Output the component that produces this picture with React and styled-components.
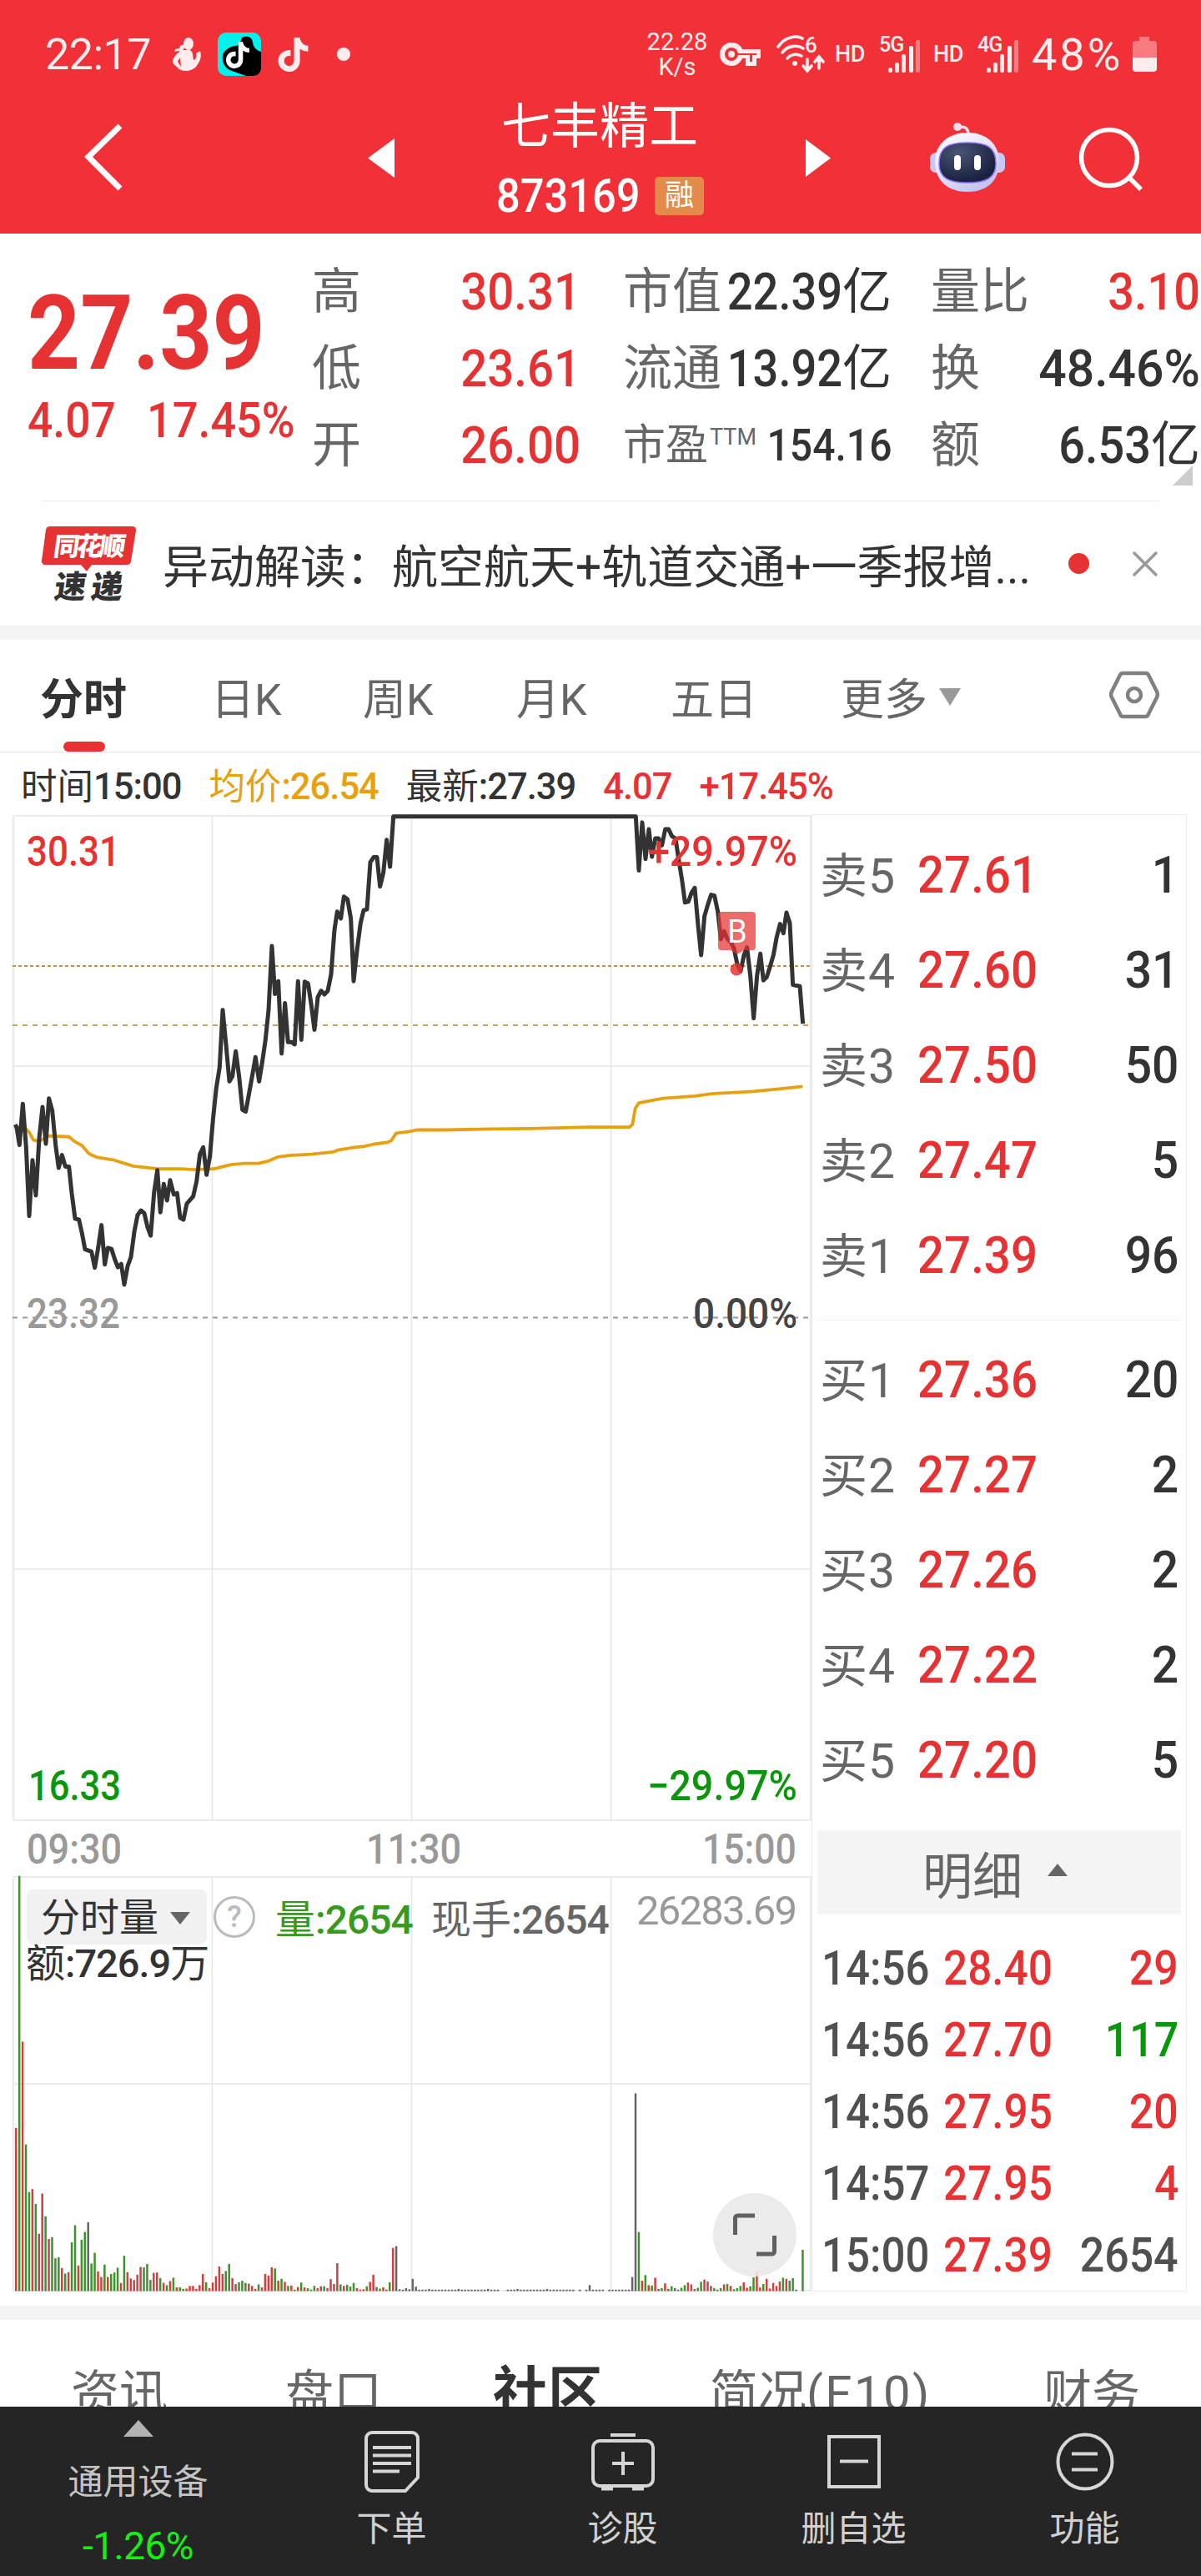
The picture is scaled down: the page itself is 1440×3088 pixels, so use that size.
import React from "react";
import styled, { createGlobalStyle } from "styled-components";
import { FaTiktok } from "react-icons/fa6";

const RED = "#e63232";
const GREEN = "#0a960a";
const INK = "#333333";
const GREY = "#666666";
const MUTE = "#999999";
const FONT = 'Roboto, "Noto Sans CJK SC", sans-serif';

const GlobalStyle = createGlobalStyle`
    * {
        box-sizing: border-box;
    }
    body {
        margin: 0;
        background: #ffffff;
        font-family: ${FONT};
        color: ${INK};
    }
    svg {
        display: block;
        flex: none;
        overflow: visible;
    }
`

// one entry for each turning point of the minute line
const PRICE = "55,1090 60,1097 70,1135 82,1045 94,1140 105,1290 117,1168 129,1245 141,1120 153,1052 165,1132 176,1033 188,1060 200,1135 211,1185 223,1157 235,1182 248,1182 258,1240 270,1296 284,1298 295,1328 306,1363 329,1368 341,1403 353,1360 365,1310 377,1396 388,1360 401,1362 413,1385 424,1402 436,1395 447,1440 459,1400 471,1380 483,1325 495,1288 507,1278 519,1284 531,1315 542,1333 554,1240 566,1190 577,1282 589,1220 601,1256 612,1212 625,1243 637,1240 648,1294 660,1298 672,1263 695,1247 707,1215 719,1155 731,1140 743,1200 755,1160 766,1080 778,1010 790,965 801,840 813,915 825,996 836,985 848,930 860,985 872,1058 884,1062 895,1025 907,985 919,943 932,996 943,955 955,905 966,840 978,700 989,805 1001,777 1013,935 1025,825 1036,910 1048,910 1060,915 1072,777 1084,905 1096,778 1108,782 1120,830 1131,883 1143,812 1155,798 1167,806 1179,798 1191,762 1203,665 1213,625 1226,640 1237,592 1250,598 1262,640 1272,777 1285,705 1297,650 1308,622 1320,620 1332,517 1344,506 1356,506 1367,570 1379,540 1391,468 1403,527 1415,417 2287,417 2298,535 2310,430 2322,510 2334,445 2345,505 2357,465 2369,465 2381,480 2393,445 2405,445 2417,460 2430,465 2441,510 2453,555 2464,605 2476,603 2488,583 2499,573 2511,655 2522,720 2534,635 2546,610 2558,588 2570,590 2582,625 2593,685 2605,668 2617,685 2629,692 2640,705 2652,740 2664,755 2676,720 2687,703 2699,765 2711,858 2723,765 2735,717 2746,775 2758,768 2770,745 2782,720 2794,680 2806,652 2818,672 2829,627 2841,650 2852,785 2877,788 2888,870";

const AVERAGE = "58,1095 94,1100 106,1108 120,1124 141,1127 176,1115 248,1117 270,1128 295,1136 320,1154 350,1162 410,1168 480,1181 566,1187 650,1187 700,1189 770,1187 830,1178 880,1175 930,1175 965,1170 1000,1161 1040,1158 1120,1155 1200,1150 1215,1146 1275,1140 1310,1138 1345,1133 1395,1129 1408,1125 1425,1109 1470,1106 1500,1102 1600,1102 1770,1100 1910,1099 2120,1096 2265,1096 2275,1090 2285,1055 2298,1043 2385,1033 2500,1028 2560,1023 2710,1018 2810,1012 2887,1007";

// r = up, g = down, k = flat
const OPEN_BARS = "r438 g1115 r670 g394 g266 r274 g234 r154 r262 g201 r140 g145 g88 g91 r62 g47 r51 g131 g177 r69 g138 g159 k185 g74 g103 r53 r38 g71 r38 g46 g50 g63 r22 g95 r51 r34 r30 r44 r65 g64 g73 g30 r49 r50 g35 r22 g16 r27 g36 r10 g10 g6 r7 r14 r14 r6 r16 r46 g24 r8 r23 r40 r66 r46 g54 g73 r35 r19 g24 g28 g22 r20 r14 r6 g18 r10 r46 r42 r64 g61 r28 g33 r25 g14 r15 g4 r11 g23 r10 g8 g4 g14 r8 r13 g13 r8 r32 r19 r75 g18 r14 g17 g12 g22 r8 r4 r5 g13 r25 r44 k11 g7 r10 r4 g24 r116 k121 k5 k4 k8 k5 k33 k12 k4".split(" ");
const CLOSE_BARS = "k38 k531 g159 r28 g43 r16 g15 r36 k6 g8 r21 k6 g13 k8 g4 g9 g16 r23 r18 r6 g9 g25 r31 r26 r14 g8 g4 g8 r18 g19 r14 g5 g8 g14 r24 r9 g13 g37 r53 r10 g19 r33 r7 r22 r14 r26 g36 r33 g28 g35 k4 k0 g111".split(" ");

const buildBars = () => {
    const bars = OPEN_BARS.map((b, i) => ({ i, b }));
    for (let i = OPEN_BARS.length; i < 188; i++) {
        if (i === 148 || i === 149 || i === 171 || i === 173 || i === 180) continue;
        bars.push({ i, b: i === 175 ? "k16" : i % 9 === 0 ? "k6" : "k4" });
    }
    return bars.concat(CLOSE_BARS.map((b, i) => ({ i: i + 188, b })));
}

const BAR_COLORS = { r: "#cf4040", g: "#3d922c", k: "#666666" };

const ASKS = [
    ["卖5", "27.61", "1"],
    ["卖4", "27.60", "31"],
    ["卖3", "27.50", "50"],
    ["卖2", "27.47", "5"],
    ["卖1", "27.39", "96"],
];

const BIDS = [
    ["买1", "27.36", "20"],
    ["买2", "27.27", "2"],
    ["买3", "27.26", "2"],
    ["买4", "27.22", "2"],
    ["买5", "27.20", "5"],
];

const TICKS = [
    ["14:56", "28.40", "29", RED],
    ["14:56", "27.70", "117", GREEN],
    ["14:56", "27.95", "20", RED],
    ["14:57", "27.95", "4", RED],
    ["15:00", "27.39", "2654", "#505050"],
];

const Signal = () => (
    <svg width="39" height="39" viewBox="0 0 39 39" fill="#ffecec">
        <rect x="0" y="33" width="5" height="6" rx="2.5" />
        <rect x="8" y="27" width="5" height="12" rx="2" />
        <rect x="16" y="17" width="5" height="22" rx="2" />
        <rect x="25" y="7" width="5" height="32" rx="2" />
        <rect x="33" y="0" width="5" height="39" rx="2" opacity="0.4" />
    </svg>
)

const StatusIcons = () => (
    <StatusBar>
        <Clock>22:17</Clock>
        <StatusSlot $ml={27}>
            <svg width="34" height="40" viewBox="0 0 34 40" fill="#ffecec">
                <ellipse cx="19" cy="7.5" rx="6" ry="7.5" />
                <path d="M17 7l-8 3-1 3-5 1-1 3 5-1 3 2 3-4 3-3z" />
                <path d="M12 15h9c4 3 3 8 4 12 3-1 4-4 3-8l5-3c2 7 0 12-3 16-4 9-20 11-25 3-5-3-6-6-4-10 3-5 6-8 11-10zM9 24l-3 5 4 6z" fillRule="evenodd" />
            </svg>
        </StatusSlot>
        <StatusSlot $ml={20}>
            <svg width="52" height="52" viewBox="0 0 52 52">
                <rect width="52" height="52" rx="10" fill="#00f2ea" />
                <path d="M29 6c5-3 13-1 13 6 1 6 4 9 10 11v19c0 6-4 10-10 10h-8L17 46C8 43 5 35 6 27c2-6 8-10 15-11l5-1z" fill="#000" />
                <FaTiktok x="8" y="11" width="35" height="32" size={32} color="#fff" />
            </svg>
        </StatusSlot>
        <StatusSlot $ml={18}><FaTiktok size={41} color="#ffecec" /></StatusSlot>
        <StatusSlot $ml={32}><Dot $size={16} $color="#ffecec" /></StatusSlot>
        <Speed><span>22.28</span><span>K/s</span></Speed>
        <StatusSlot $ml={13}>
            <svg width="50" height="30" viewBox="0 0 50 30">
                <path d="M14 1a14 14 0 1 0 13 19h4v9h13v-9h5V9H27A14 14 0 0 0 14 1z M14 7c5 0 7 3 8 7h22v2h-5v8h-3v-8H22c-1 4-4 7-8 7a8 8 0 0 1 0-16z" fill="#ffecec" fillRule="evenodd" />
                <circle cx="14" cy="15" r="4" fill="#ffecec" />
            </svg>
        </StatusSlot>
        <StatusSlot $ml={18}>
            <svg width="58" height="44" viewBox="0 0 58 44" fill="none" stroke="#ffecec" strokeWidth="3.6" strokeLinecap="round">
                <path d="M2 13c8-12 22-14 29-10" />
                <path d="M7 20c6-8 17-10 25-5" />
                <path d="M13 27c4-5 11-6 17-3" />
                <circle cx="22" cy="33" r="3" fill="#ffecec" stroke="none" />
                <path d="M37 28v13M32 36l5 6 5-6M51 39V26M46 31l5-6 5 6" />
                <text x="34" y="20" fontSize="26" fontWeight="500" fontFamily="Roboto, sans-serif" fill="#ffecec" stroke="none">6</text>
            </svg>
        </StatusSlot>
        <Hd $ml={12}>HD</Hd>
        <Network $ml={17}><b>5G</b><Signal /></Network>
        <Hd $ml={15}>HD</Hd>
        <Network $ml={17}><b>4G</b><Signal /></Network>
        <Battery>48%</Battery>
        <StatusSlot $ml={8}>
            <svg width="29" height="42" viewBox="0 0 29 42">
                <path d="M8 0h12v5h5a4 4 0 0 1 4 4v16H0V9a4 4 0 0 1 4-4h4z" fill="#ffecec" opacity="0.4" />
                <path d="M0 25h29v13a4 4 0 0 1-4 4H4a4 4 0 0 1-4-4z" fill="#ffecec" />
            </svg>
        </StatusSlot>
    </StatusBar>
)

const Robot = () => (
    <svg width="90" height="84" viewBox="0 0 90 84">
        <defs>
            <linearGradient id="shell" x1="0" y1="0" x2="0.6" y2="1">
                <stop offset="0" stopColor="#ffffff" />
                <stop offset="0.6" stopColor="#e2e0fb" />
                <stop offset="1" stopColor="#c3c4f4" />
            </linearGradient>
            <radialGradient id="visor" cx="0.35" cy="0.25" r="0.7">
                <stop offset="0" stopColor="#4a5474" />
                <stop offset="1" stopColor="#1b2340" />
            </radialGradient>
        </defs>
        <circle cx="33" cy="5" r="5" fill="#f6dcec" />
        <path d="M34 6c7-2 12 0 12 8" fill="none" stroke="#f3dcec" strokeWidth="3.5" />
        <rect x="0" y="36" width="16" height="24" rx="7" fill="#c9c8f3" />
        <rect x="74" y="36" width="16" height="24" rx="7" fill="#c9c8f3" />
        <path d="M45 12c22 0 38 13 38 35 0 23-15 36-38 36S6 70 6 47c0-22 17-35 39-35z" fill="url(#shell)" />
        <path d="M45 24c24 0 34 6 34 25 0 17-11 23-34 23S11 66 11 49c0-19 10-25 34-25z" fill="url(#visor)" stroke="#8a6cf0" strokeWidth="1.5" />
        <rect x="29" y="39" width="8" height="18" rx="4" fill="#fff" />
        <rect x="53" y="39" width="8" height="18" rx="4" fill="#fff" />
    </svg>
)

const PriceChart = () => (
    <svg width="974" height="1206" viewBox="0 0 974 1206">
        <g stroke="#e6e6e6" strokeWidth="1.5" fill="none">
            <path d="M16 1H972M16 301H972M16 904H972M16 1205H972" />
            <path d="M254.5 1V1205M493.5 1V1205M732.5 1V1205" />
            <path d="M16 0V1206M972 0V1206" stroke="#ebebeb" strokeWidth="2.5" />
        </g>
        <path d="M15 181H973" stroke="#c58f4c" strokeWidth="2" strokeDasharray="4 3" />
        <path d="M15 252H973" stroke="#bfa766" strokeWidth="1.8" strokeDasharray="6 6" />
        <path d="M15 602.5H973" stroke="#999" strokeWidth="1.8" strokeDasharray="6 6" />
        <g transform="translate(0 -227) scale(0.33333 0.54855)" fill="none" strokeLinejoin="round">
            <polyline points={AVERAGE} stroke="#e6a010" strokeWidth="3.8" vectorEffect="non-scaling-stroke" />
            <polyline points={PRICE} stroke="#333" strokeWidth="5" vectorEffect="non-scaling-stroke" />
        </g>
        <AxisText x="32" y="61" textLength="112" fill={RED}>30.31</AxisText>
        <AxisText x="777" y="61" textLength="179" fill={RED}>+29.97%</AxisText>
        <AxisText x="32" y="615" textLength="112" fill={MUTE}>23.32</AxisText>
        <AxisText x="831" y="615" textLength="125" fill="#444">0.00%</AxisText>
        <AxisText x="34" y="1181" textLength="111" fill={GREEN}>16.33</AxisText>
        <AxisText x="776" y="1181" textLength="180" fill={GREEN}>−29.97%</AxisText>
        <g fill={RED}>
            <path d="M865 116h37a4 4 0 0 1 4 4v38a4 4 0 0 1-4 4h-10l-8 5-8-5h-11a4 4 0 0 1-4-4v-38a4 4 0 0 1 4-4z" opacity="0.72" />
            <ellipse cx="883" cy="185" rx="7.5" ry="7.5" opacity="0.85" />
        </g>
        <text x="872" y="153" fontSize="38" fill="#fff">B</text>
    </svg>
)

const VolumeChart = () => (
    <svg width="974" height="500" viewBox="0 0 974 500">
        <g stroke="#e6e6e6" strokeWidth="1.5" fill="none">
            <path d="M16 1H972M16 249H972M16 497H972" />
            <path d="M254.5 1V498M493.5 1V498M732.5 1V498" />
            <path d="M16 0V498M972 0V498" stroke="#ebebeb" strokeWidth="2.5" />
        </g>
        {buildBars().map(({ i, b }) => {
            const h = Number(b.slice(1)) / 2.24;
            return <rect key={i} x={18 + i * 3.93} y={497.5 - h} width="2.5" height={h} fill={BAR_COLORS[b[0]]} />
        })}
    </svg>
)

const App = () => {
    return (
        <Page>
            <GlobalStyle />
            <Header>
                <StatusIcons />
                <NavBar>
                    <NavCell $pl={101}>
                        <svg width="46" height="82" viewBox="0 0 46 82" fill="none" stroke="#fff" strokeWidth="7">
                            <path d="M43 3L5 40l38 38" />
                        </svg>
                    </NavCell>
                    <NavCell>
                        <svg width="32" height="47" viewBox="0 0 32 47" fill="#fff"><path d="M32 0v47L0 23.500z" /></svg>
                    </NavCell>
                    <StockTitle>
                        <h1>七丰精工</h1>
                        <div>
                            <Num $size={55} $sx={0.92} $weight={500}>873169</Num>
                            <Badge>融</Badge>
                        </div>
                    </StockTitle>
                    <NavCell>
                        <svg width="30" height="45" viewBox="0 0 30 45" fill="#fff"><path d="M0 0v45l30-22.500z" /></svg>
                    </NavCell>
                    <NavCell><Robot /></NavCell>
                    <NavCell $pt={2}>
                        <svg width="78" height="78" viewBox="0 0 78 78" fill="none" stroke="#fff" strokeWidth="5.500">
                            <circle cx="36" cy="38" r="33.500" />
                            <path d="M60 62l14 14" />
                        </svg>
                    </NavCell>
                </NavBar>
            </Header>

            <Quote>
                <Last>
                    <Num $size={124} $sx={0.888} $weight={700}>27.39</Num>
                    <div>
                        <Num $size={60} $sx={0.89}>4.07</Num>
                        <Num $size={60} $sx={0.9}>17.45%</Num>
                    </div>
                </Last>
                <Stats>
                    <Stat><span>高</span><Value $color={RED}><Num $right $sx={0.91}>30.31</Num></Value></Stat>
                    <Stat><span>低</span><Value $color={RED}><Num $right $sx={0.91}>23.61</Num></Value></Stat>
                    <Stat><span>开</span><Value $color={RED}><Num $right $sx={0.91}>26.00</Num></Value></Stat>
                </Stats>
                <Stats>
                    <Stat><span>市值</span><Value><Num $right $sx={0.875}>22.39</Num>亿</Value></Stat>
                    <Stat><span>流通</span><Value><Num $right $sx={0.875}>13.92</Num>亿</Value></Stat>
                    <Stat $small><span>市盈<sup>TTM</sup></span><Value><Num $right $size={54} $sx={0.89}>154.16</Num></Value></Stat>
                </Stats>
                <Stats>
                    <Stat><span>量比</span><Value $color={RED}><Num $right $sx={0.9}>3.10</Num></Value></Stat>
                    <Stat><span>换</span><Value><Num $right $sx={0.95}>48.46%</Num></Value></Stat>
                    <Stat><span>额</span><Value><Num $right $sx={0.9}>6.53</Num>亿</Value></Stat>
                    <Corner />
                </Stats>
            </Quote>

            <News>
                <svg width="113" height="92" viewBox="0 0 113 92">
                    <path d="M10 1h99a4 4 0 0 1 4 5l-6 37a5 5 0 0 1-5 4H60l-6 8-7-8H4a4 4 0 0 1-4-5L5 5a5 5 0 0 1 5-4z" fill={RED} />
                    <LogoText x="18" y="36" fontSize="31" textLength="86" fill="#fff" transform="skewX(-8)">同花顺</LogoText>
                    <LogoText x="26" y="87" fontSize="38" textLength="82" fill="#333" transform="skewX(-8)">速递</LogoText>
                </svg>
                <p>异动解读：航空航天+轨道交通+一季报增...</p>
                <Dot $size={25} $color={RED} />
                <svg width="30" height="30" viewBox="0 0 30 30" stroke="#999" strokeWidth="3.500" strokeLinecap="round">
                    <path d="M2 2l26 26M28 2L2 28" />
                </svg>
            </News>
            <Band />

            <Tabs>
                <Tab $active>分时</Tab>
                <Tab>日K</Tab>
                <Tab>周K</Tab>
                <Tab>月K</Tab>
                <Tab>五日</Tab>
                <Tab>更多<Caret $down $size={13} $h={21} $color="#999" /></Tab>
                <svg width="60" height="58" viewBox="0 0 60 58" fill="none" stroke="#808080" strokeWidth="4.500" strokeLinejoin="round">
                    <path d="M17 3h26a4 4 0 0 1 4 2l10 20a8 8 0 0 1 0 7L47 52a4 4 0 0 1-4 3H17a4 4 0 0 1-4-3L3 32a8 8 0 0 1 0-7L13 5a4 4 0 0 1 4-2z" />
                    <circle cx="30" cy="29" r="8" />
                </svg>
            </Tabs>

            <InfoLine>
                <span>时间<b>15:00</b></span>
                <InfoItem $color="#e6a010">均价<b>:26.54</b></InfoItem>
                <InfoItem>最新<b>:27.39</b></InfoItem>
                <InfoItem $color={RED}><b>4.07</b></InfoItem>
                <InfoItem $color={RED}><b>+17.45%</b></InfoItem>
            </InfoLine>

            <Board>
                <ChartColumn>
                    <PriceChart />
                    <TimeAxis>
                        <Num $size={50} $sx={0.9}>09:30</Num>
                        <Num $size={50} $sx={0.9}>11:30</Num>
                        <Num $size={50} $sx={0.89} $right>15:00</Num>
                    </TimeAxis>
                    <VolumePane>
                        <VolumeChart />
                        <Legend>
                            <LegendRow>
                                <Picker>分时量<Caret $down $size={12} $color={GREY} /></Picker>
                                <Help>?</Help>
                                <LegendItem $color="#379a1f" $w={187}>量<b>:2654</b></LegendItem>
                                <LegendItem $color={GREY} $w={246}>现手<b>:2654</b></LegendItem>
                                <MaxVolume>26283.69</MaxVolume>
                            </LegendRow>
                            <Amount>额<b>:726.9</b>万</Amount>
                        </Legend>
                        <Expand>
                            <svg width="54" height="54" viewBox="0 0 54 54" fill="none" stroke="#606060" strokeWidth="5">
                                <path d="M3.500 27V7a3 3 0 0 1 3-3H27M50.500 28v19a3 3 0 0 1-3 3H29" />
                            </svg>
                        </Expand>
                    </VolumePane>
                </ChartColumn>

                <OrderBook>
                    <Side>
                        {ASKS.map(([label, price, qty]) => (
                            <Level key={label}>
                                <label>{label}</label>
                                <Num $color={RED} $sx={0.91}>{price}</Num>
                                <Num $right>{qty}</Num>
                            </Level>
                        ))}
                    </Side>
                    <Side $bids>
                        {BIDS.map(([label, price, qty]) => (
                            <Level key={label}>
                                <label>{label}</label>
                                <Num $color={RED} $sx={0.91}>{price}</Num>
                                <Num $right>{qty}</Num>
                            </Level>
                        ))}
                    </Side>
                    <DetailBar>明细<Caret $size={12} $color={GREY} /></DetailBar>
                    <Ticks>
                        {TICKS.map(([time, price, qty, color], i) => (
                            <Tick key={i}>
                                <Num $size={57} $sx={0.895} $color="#505050">{time}</Num>
                                <Num $size={57} $sx={0.9} $color={RED}>{price}</Num>
                                <Num $size={57} $sx={0.91} $right $color={color}>{qty}</Num>
                            </Tick>
                        ))}
                    </Ticks>
                </OrderBook>
            </Board>
            <Band />

            <Sections>
                <span>资讯</span>
                <span>盘口</span>
                <strong>社区</strong>
                <span>简况<i>(F10)</i></span>
                <span>财务</span>
            </Sections>

            <BottomBar>
                <IndexCell>
                    <Caret $size={18} $h={20} $color="#b3b3b3" />
                    <span>通用设备</span>
                    <em>-1.26%</em>
                </IndexCell>
                <Action>
                    <svg width="66" height="74" viewBox="0 0 66 74" fill="none" stroke="#d6d6d6" strokeWidth="4">
                        <path d="M9 2h48a7 7 0 0 1 7 7v47L49 72H9a7 7 0 0 1-7-7V9a7 7 0 0 1 7-7z" />
                        <path d="M10 20h46M10 29.500h46M10 39h46M10 48.500h32" />
                    </svg>
                    下单
                </Action>
                <Action>
                    <svg width="76" height="74" viewBox="0 0 76 74" fill="none" stroke="#d6d6d6" strokeWidth="4">
                        <rect x="2" y="12" width="72" height="54" rx="8" />
                        <path d="M23 5h30M38 25v28M25 39h26M12 69.500h14M49 69.500h14" />
                    </svg>
                    诊股
                </Action>
                <Action>
                    <svg width="66" height="74" viewBox="0 0 66 74" fill="none" stroke="#d6d6d6" strokeWidth="4">
                        <rect x="3" y="7" width="60" height="60" />
                        <path d="M16 36.500h34" />
                    </svg>
                    删自选
                </Action>
                <Action>
                    <svg width="70" height="74" viewBox="0 0 70 74" fill="none" stroke="#d6d6d6" strokeWidth="4">
                        <circle cx="35" cy="37" r="32.500" />
                        <path d="M19 27.500h31M19 46.500h31" />
                    </svg>
                    功能
                </Action>
            </BottomBar>
        </Page>
    )
}

const Page = styled.div`
    width: 1440px;
    height: 3088px;
    overflow: hidden;
    display: flex;
    flex-direction: column;
    background: #ffffff;
`

// figures are set a little narrower than the text font
const Num = styled.span`
    display: inline-block;
    font-size: ${({ $size }) => $size || 62}px;
    font-weight: ${({ $weight }) => $weight || 500};
    color: ${({ $color }) => $color || "inherit"};
    transform: scaleX(${({ $sx }) => $sx || 0.92});
    transform-origin: ${({ $right }) => ($right ? "right" : "left")} center;
    white-space: nowrap;
`

const Dot = styled.i`
    flex: none;
    display: block;
    width: ${({ $size }) => $size}px;
    height: ${({ $size }) => $size}px;
    border-radius: 50%;
    background: ${({ $color }) => $color};
`

const Caret = styled.i`
    display: inline-block;
    border: ${({ $size }) => $size}px solid transparent;
    ${({ $down, $size, $h, $color }) => $down
        ? `border-top: ${$h || $size + 3}px solid ${$color}; border-bottom: 0;`
        : `border-bottom: ${$h || $size + 3}px solid ${$color}; border-top: 0;`}
`

const Header = styled.header`
    height: 280px;
    flex: none;
    background: #f23037;
    color: #ffffff;
`

const StatusBar = styled.div`
    height: 110px;
    padding: 20px 0 0 54px;
    display: flex;
    align-items: center;
    color: #ffecec;
`

const StatusSlot = styled.div`
    flex: none;
    margin-left: ${({ $ml }) => $ml}px;
`

const Clock = styled.span`
    width: 126px;
    flex: none;
    font-size: 52px;
    letter-spacing: -0.5px;
    white-space: nowrap;
`

const Speed = styled.div`
    width: 76px;
    margin-left: 354px;
    flex: none;
    display: flex;
    flex-direction: column;
    align-items: center;
    font-size: 29px;
    line-height: 30px;
`

const Hd = styled.span`
    flex: none;
    width: 36px;
    margin-left: ${({ $ml }) => $ml}px;
    font-size: 27px;
    font-weight: 500;
    letter-spacing: -0.5px;
`

const Network = styled.div`
    flex: none;
    display: flex;
    align-items: flex-start;
    height: 45px;
    margin-left: ${({ $ml }) => $ml}px;
    b {
        width: 11px;
        font-size: 25px;
        line-height: 22px;
        font-weight: 500;
        letter-spacing: -1px;
    }
    svg {
        margin-top: 5px;
    }
`

const Battery = styled.span`
    flex: none;
    width: 113px;
    margin-left: 15px;
    font-size: 54px;
    letter-spacing: 3px;
`

const NavBar = styled.nav`
    height: 170px;
    display: grid;
    grid-template-columns: 441px 156px 369px 149px 179px 146px;
`

const NavCell = styled.div`
    display: flex;
    align-items: center;
    height: 158px;
    padding-left: ${({ $pl }) => $pl || 0}px;
    padding-top: ${({ $pt }) => $pt || 0}px;
`

const StockTitle = styled.div`
    width: 247px;
    h1 {
        margin: 5px 0 0 4px;
        font-size: 59px;
        line-height: 74px;
        font-weight: 400;
        white-space: nowrap;
    }
    div {
        display: flex;
        align-items: center;
        justify-content: space-between;
        height: 92px;
        margin-left: -2px;
    }
`

const Badge = styled.span`
    width: 59px;
    height: 46px;
    border-radius: 5px;
    background: #e38b48;
    font-size: 35px;
    line-height: 45px;
    text-align: center;
`

const Quote = styled.section`
    height: 320px;
    flex: none;
    display: grid;
    grid-template-columns: 374px 322px 319px 321px;
    justify-content: start;
    & > :nth-child(3) {
        margin-left: 51px;
        margin-right: -54px;
    }
    & > :nth-child(4) {
        margin-left: 101px;
        margin-right: -103px;
    }
`

const Last = styled.div`
    color: ${RED};
    padding: 47px 0 0 33px;
    & > span {
        line-height: 146px;
    }
    div {
        display: flex;
        gap: 24px;
        height: 60px;
        align-items: center;
    }
`

const Stats = styled.div`
    padding-top: 24px;
    position: relative;
`

const Stat = styled.div`
    height: 92px;
    display: flex;
    align-items: center;
    font-size: ${({ $small }) => ($small ? 51 : 59)}px;
    line-height: 92px;
    color: ${GREY};
    white-space: nowrap;
    & > span {
        flex: none;
    }
    sup {
        font-size: 27px;
        line-height: 20px;
        vertical-align: 18px;
        margin-left: 2px;
    }
`

const Value = styled.div`
    flex: 1;
    min-width: 0;
    display: flex;
    justify-content: flex-end;
    color: ${({ $color }) => $color || INK};
`

const Corner = styled.i`
    position: absolute;
    right: 9px;
    bottom: 18px;
    border-left: 24px solid transparent;
    border-bottom: 24px solid #cccccc;
`

const News = styled.section`
    height: 150px;
    flex: none;
    margin: 0 50px;
    border-top: 1.500px solid #eaeaea;
    display: flex;
    align-items: center;
    p {
        margin: 0 0 0 32px;
        width: 1086px;
        font-size: 55px;
        line-height: 80px;
        padding-top: 9px;
        white-space: nowrap;
    }
    & > i + svg {
        margin-left: 52px;
    }
`

const LogoText = styled.text`
    font-weight: 900;
`

const AxisText = styled.text.attrs({ lengthAdjust: "spacingAndGlyphs" })`
    font-size: 50px;
    font-weight: 500;
`

const Band = styled.div`
    flex: none;
    height: 17px;
    background: #f4f4f4;
`

const Tabs = styled.div`
    flex: none;
    height: 135px;
    border-bottom: 1.500px solid #e6e6e6;
    display: grid;
    grid-template-columns: 205px 182px 184px 185px 204px 322px 60px;
    padding-left: 48px;
    align-items: center;
    svg {
        margin-top: -2px;
    }
`

const Tab = styled.div`
    position: relative;
    height: 134px;
    line-height: 146px;
    font-size: 52px;
    font-weight: ${({ $active }) => ($active ? 700 : 400)};
    color: ${({ $active }) => ($active ? INK : GREY)};
    i {
        margin-left: 14px;
        vertical-align: 11px;
    }
    &::after {
        content: "";
        display: ${({ $active }) => ($active ? "block" : "none")};
        position: absolute;
        left: 28px;
        bottom: 0;
        width: 50px;
        height: 12px;
        border-radius: 6px;
        background: ${RED};
    }
`

const InfoLine = styled.div`
    flex: none;
    height: 74px;
    padding: 10px 0 0 25px;
    display: flex;
    align-items: center;
    line-height: 64px;
    font-size: 43.500px;
    b {
        font-weight: 500;
        letter-spacing: -1px;
    }
`

const InfoItem = styled.span`
    margin-left: 33px;
    color: ${({ $color }) => $color || INK};
`

const Board = styled.section`
    flex: none;
    height: 1788px;
    display: flex;
`

const ChartColumn = styled.div`
    flex: none;
    width: 973px;
    padding-top: 1px;
    text {
        font-family: ${FONT};
    }
`

const TimeAxis = styled.div`
    height: 66px;
    padding: 2px 18px 0 32px;
    display: flex;
    justify-content: space-between;
    align-items: center;
    color: ${MUTE};
    & > :nth-child(2) {
        margin-left: 18px;
    }
`

const VolumePane = styled.div`
    position: relative;
    height: 500px;
`

const Legend = styled.div`
    position: absolute;
    left: 32px;
    right: 0;
    top: 16px;
    color: ${INK};
    font-size: 48px;
    b {
        display: inline-block;
        font-weight: 500;
        letter-spacing: -1px;
    }
`

const LegendRow = styled.div`
    height: 66px;
    display: flex;
    align-items: center;
    white-space: nowrap;
`

const Picker = styled.div`
    width: 216px;
    height: 66px;
    padding-left: 17px;
    border-radius: 8px;
    background: #f1f1f1;
    font-size: 47px;
    line-height: 68px;
    i {
        margin-left: 14px;
        vertical-align: 8px;
    }
`

const Help = styled.div`
    width: 50px;
    height: 50px;
    margin: 0 24px 0 8px;
    border: 3.500px solid #bbbbbb;
    border-radius: 50%;
    color: #bbbbbb;
    font-size: 36px;
    font-weight: 500;
    line-height: 44px;
    text-align: center;
`

const LegendItem = styled.span`
    width: ${({ $w }) => $w}px;
    margin-top: -3px;
    color: ${({ $color }) => $color};
`

const MaxVolume = styled.span`
    margin-top: -16px;
    color: ${MUTE};
    letter-spacing: -1.800px;
    font-size: 49px;
`

const Amount = styled.div`
    line-height: 46px;
    margin-left: -1px;
    font-size: 47px;
`

const Expand = styled.div`
    position: absolute;
    left: 855px;
    top: 380px;
    width: 100px;
    height: 100px;
    border-radius: 50%;
    background: rgba(233, 233, 233, 0.9);
    display: flex;
    align-items: center;
    justify-content: center;
`

const OrderBook = styled.div`
    width: 450px;
    height: 1771px;
    border: 1.500px solid #ececec;
    padding: 14px 6px 0 6px;
`

const Side = styled.div`
    height: ${({ $bids }) => ($bids ? 612 : 591)}px;
    padding-top: ${({ $bids }) => ($bids ? 13 : 0)}px;
    border-top: ${({ $bids }) => ($bids ? "1.5px solid #f0f0f0" : "0")};
`

const Level = styled.div`
    height: 114px;
    padding: 0 3px 0 3px;
    display: grid;
    grid-template-columns: 117px 150px 1fr;
    align-items: center;
    font-size: 57px;
    color: ${GREY};
    label {
        margin-top: -7px;
        letter-spacing: 1px;
    }
    & > :last-child {
        color: ${INK};
        justify-self: end;
    }
`

const DetailBar = styled.div`
    height: 101px;
    background: #f4f4f4;
    display: flex;
    align-items: center;
    padding-left: 126px;
    gap: 30px;
    font-size: 60px;
    color: ${GREY};
    i {
        margin-top: -6px;
    }
`

const Ticks = styled.div`
    padding-top: 21px;
`

const Tick = styled.div`
    height: 86px;
    padding: 0 3px 0 5px;
    display: grid;
    grid-template-columns: 146px 140px 1fr;
    align-items: center;
    & > :last-child {
        justify-self: end;
    }
`

const Sections = styled.div`
    flex: none;
    height: 104px;
    overflow: hidden;
    display: grid;
    grid-template-columns: 257px 249px 260px 400px 150px;
    padding: 48px 0 0 85px;
    font-size: 58px;
    line-height: 80px;
    color: ${GREY};
    strong {
        font-size: 66px;
        color: ${INK};
    }
    i {
        font-style: normal;
        letter-spacing: 2.500px;
    }
`

const BottomBar = styled.footer`
    flex: none;
    height: 203px;
    background: #252525;
    display: grid;
    grid-template-columns: 331px repeat(4, 277px);
    color: #d0d0d0;
    font-size: 42px;
`

const IndexCell = styled.div`
    display: flex;
    flex-direction: column;
    align-items: center;
    padding-top: 16px;
    span {
        line-height: 60px;
        margin-top: 25px;
        color: #c4c4c4;
    }
    em {
        font-style: normal;
        font-size: 46px;
        line-height: 50px;
        margin-top: 21px;
        letter-spacing: -0.5px;
        color: #12f312;
    }
`

const Action = styled.div`
    display: flex;
    flex-direction: column;
    align-items: center;
    padding-top: 29px;
    line-height: 60px;
    gap: 14px;
`

export default App
